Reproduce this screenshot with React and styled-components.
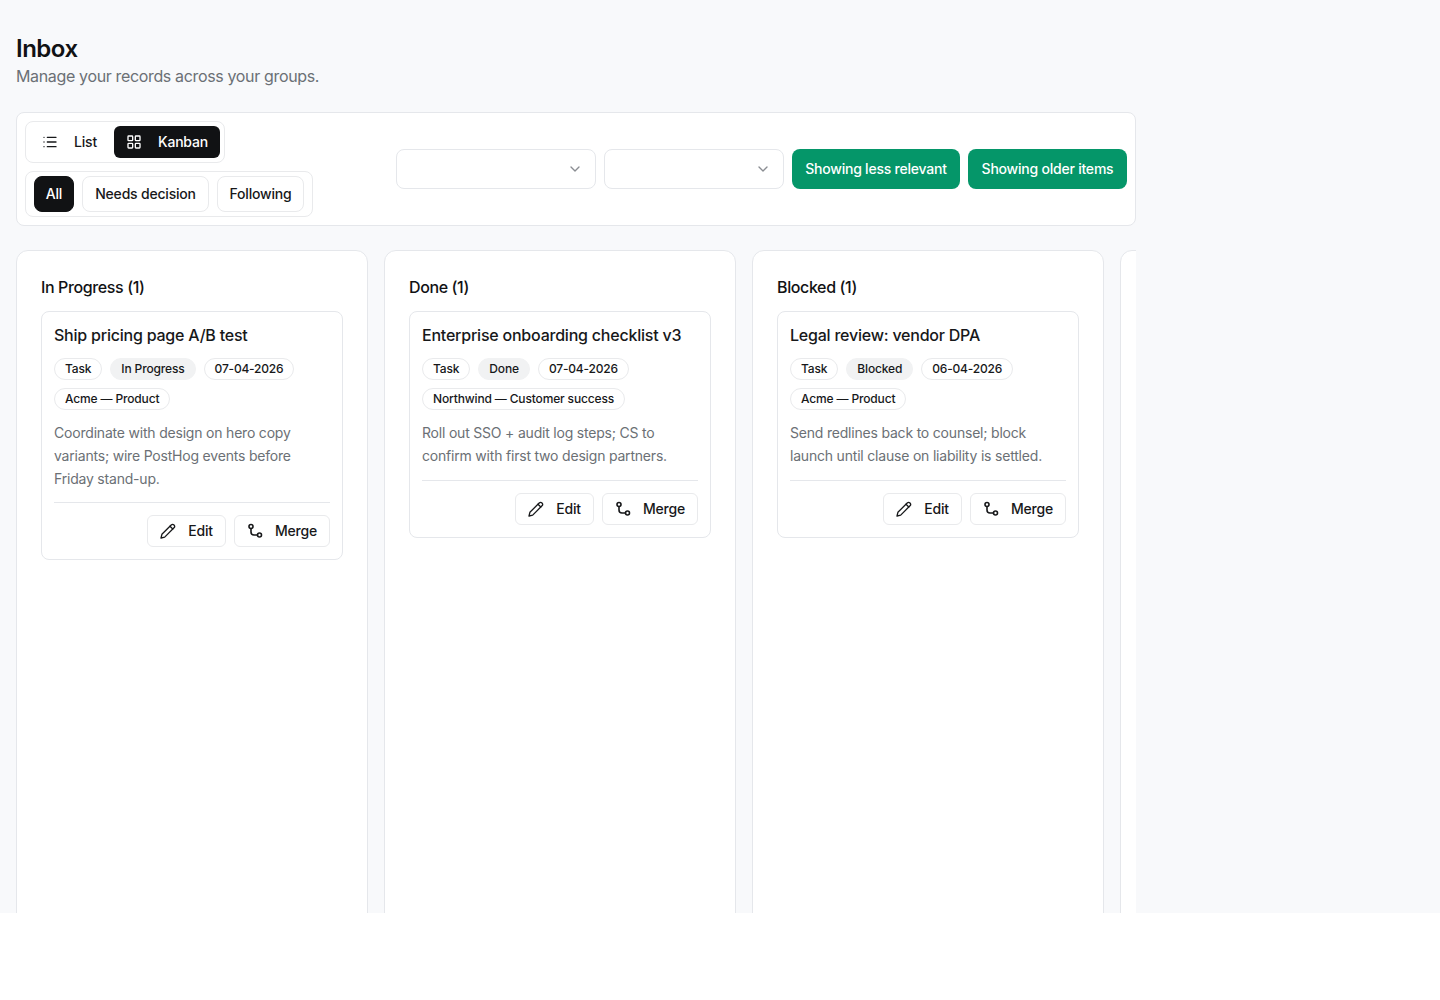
import React from "react";
import styled, { createGlobalStyle } from "styled-components";
import { List, LayoutGrid, ChevronDown } from "lucide-react";

const Global = createGlobalStyle`
  * { box-sizing: border-box; }
  html, body { margin: 0; padding: 0; background: #fff; }
  body { font-family: "Inter", "Noto Sans", sans-serif; color: #111; }
`;

const Page = styled.div`
  width: 1440px;
  height: 913px;
  background: #f8f9fb;
  padding: 33px 304px 0 16px;
  overflow: hidden;
`;
const Title = styled.h1`
  margin: 0;
  font-size: 24px;
  line-height: 31px;
  font-weight: 600;
  letter-spacing: -0.5px;
  color: #111214;
`;
const Subtitle = styled.p`
  margin: 0;
  font-size: 16px;
  line-height: 24px;
  font-weight: 400;
  letter-spacing: -0.35px;
  color: #6b7075;
`;
const Toolbar = styled.div`
  margin-top: 24px;
  height: 114px;
  background: #fff;
  border: 1px solid #e5e7eb;
  border-radius: 8px;
  padding: 8px;
  display: flex;
  align-items: center;
  justify-content: space-between;
`;
const LeftStack = styled.div`
  display: flex;
  flex-direction: column;
  align-items: flex-start;
  gap: 8px;
`;
const Segment = styled.div`
  display: flex;
  gap: ${(p) => p.$gap}px;
  padding: 4px;
  padding-left: 8px;
  padding-right: ${(p) => p.$pr ?? 4}px;
  background: #fff;
  border: 1px solid #e9eaec;
  border-radius: 8px;
`;
const ViewButton = styled.button`
  height: 32px;
  display: flex;
  align-items: center;
  gap: 16px;
  padding: 0 ${(p) => (p.$active ? 12 : 13)}px 0 ${(p) => (p.$active ? 12 : 8)}px;
  border: 0;
  border-radius: 6px;
  font: 500 14px "Inter", sans-serif;
  letter-spacing: -0.2px;
  background: ${(p) => (p.$active ? "#111214" : "#fff")};
  color: ${(p) => (p.$active ? "#fff" : "#17181a")};
  & > span {
    position: relative;
    top: -1px;
  }
`;
const FilterButton = styled.button`
  width: ${(p) => p.$w}px;
  height: 36px;
  padding: 0 0 2px;
  border-radius: 8px;
  border: 1px solid ${(p) => (p.$active ? "#111214" : "#e9eaec")};
  font: 500 14px "Inter", sans-serif;
  letter-spacing: -0.2px;
  background: ${(p) => (p.$active ? "#111214" : "#fff")};
  color: ${(p) => (p.$active ? "#fff" : "#17181a")};
`;
const RightRow = styled.div`
  display: flex;
  gap: 8px;
  align-items: center;
`;
const SelectBox = styled.div`
  width: ${(p) => p.$w}px;
  height: 40px;
  display: flex;
  align-items: center;
  justify-content: flex-end;
  padding-right: 12px;
  background: #fff;
  border: 1px solid #e5e7eb;
  border-radius: 8px;
  color: #8a8d92;
`;
const GreenButton = styled.button`
  width: ${(p) => p.$w}px;
  height: 40px;
  padding: 0 0 2px;
  border: 0;
  border-radius: 8px;
  background: #059669;
  color: #fff;
  font: 500 14px "Inter", sans-serif;
  letter-spacing: -0.22px;
`;
const Board = styled.div`
  margin-top: 24px;
  display: flex;
  gap: 16px;
  overflow: hidden;
  height: 700px;
`;
const Column = styled.section`
  flex: 0 0 352px;
  background: #fff;
  border: 1px solid #e5e7eb;
  border-radius: 12px;
  padding: 24px;
`;
const ColumnTitle = styled.h2`
  margin: 0 0 12px;
  font-size: 16px;
  line-height: 24px;
  font-weight: 500;
  letter-spacing: -0.38px;
  color: #111214;
`;
const Card = styled.article`
  background: #fff;
  border: 1px solid #e5e7eb;
  border-radius: 8px;
  padding: 12px;
`;
const CardTitle = styled.h3`
  margin: -1px 0 11px;
  font-size: 16px;
  line-height: 24px;
  font-weight: 500;
  letter-spacing: -0.22px;
  color: #17181a;
`;
const Tags = styled.div`
  display: flex;
  flex-wrap: wrap;
  gap: 8px;
`;
const Tag = styled.span`
  height: 22px;
  display: inline-flex;
  align-items: center;
  padding: 0 10px 2px;
  border-radius: 999px;
  border: 1px solid ${(p) => (p.$muted ? "#f1f2f3" : "#e9eaec")};
  background: ${(p) => (p.$muted ? "#f1f2f3" : "#fff")};
  font-size: 12px;
  font-weight: 500;
  letter-spacing: -0.15px;
  color: #17181a;
`;
const DateTag = styled(Tag)`
  letter-spacing: -0.2px;
`;
const Description = styled.p`
  margin: 12px 0 0;
  font-size: 14px;
  line-height: 22.75px;
  letter-spacing: -0.2px;
  color: #6b7075;
`;
const CardFooter = styled.div`
  margin-top: 12.1px;
  padding-top: 12px;
  border-top: 1px solid #e5e7eb;
  display: flex;
  justify-content: flex-end;
  gap: 8px;
`;
const ActionButton = styled.button`
  width: ${(p) => p.$w}px;
  height: 32px;
  display: flex;
  align-items: center;
  justify-content: center;
  gap: 12px;
  padding: 0;
  background: #fff;
  border: 1px solid #e9eaec;
  border-radius: 6px;
  font: 500 14px "Inter", sans-serif;
  letter-spacing: -0.2px;
  color: #17181a;
  & > span {
    position: relative;
    top: -0.4px;
  }
`;

const PenIcon = () => (
  <svg width="16" height="16" viewBox="0 0 16 16" fill="none" stroke="currentColor" strokeWidth="1.3" strokeLinecap="round" strokeLinejoin="round">
    <path d="M1 15l.9-3.7L11.2 2a2 2 0 0 1 2.8 0 2 2 0 0 1 0 2.8L4.7 14.1 1 15z" />
    <path d="M10 3.2l2.8 2.8" />
  </svg>
);

const MergeIcon = () => (
  <svg width="16" height="16" viewBox="0 0 16 16" fill="none" stroke="currentColor" strokeWidth="1.6" strokeLinecap="round" strokeLinejoin="round">
    <circle cx="4" cy="3.5" r="2" />
    <circle cx="12.5" cy="12" r="2" />
    <path d="M4 5.5V9a3 3 0 0 0 3 3h3.5" />
  </svg>
);

const columns = [
  { name: "In Progress (1)", title: "Ship pricing page A/B test", status: "In Progress", date: "07-04-2026", group: "Acme — Product", desc: "Coordinate with design on hero copy variants; wire PostHog events before Friday stand-up." },
  { name: "Done (1)", title: "Enterprise onboarding checklist v3", status: "Done", date: "07-04-2026", group: "Northwind — Customer success", desc: "Roll out SSO + audit log steps; CS to confirm with first two design partners." },
  { name: "Blocked (1)", title: "Legal review: vendor DPA", status: "Blocked", date: "06-04-2026", group: "Acme — Product", desc: "Send redlines back to counsel; block launch until clause on liability is settled." },
];

export default function App() {
  return (
    <>
      <Global />
      <Page>
        <Title>Inbox</Title>
        <Subtitle>Manage your records across your groups.</Subtitle>
        <Toolbar>
          <LeftStack>
            <Segment $gap={4}>
              <ViewButton><List size={16} /><span>List</span></ViewButton>
              <ViewButton $active><LayoutGrid size={16} /><span>Kanban</span></ViewButton>
            </Segment>
            <Segment $gap={8} $pr={8}>
              <FilterButton $active $w={40}>All</FilterButton>
              <FilterButton $w={127}>Needs decision</FilterButton>
              <FilterButton $w={87}>Following</FilterButton>
            </Segment>
          </LeftStack>
          <RightRow>
            <SelectBox $w={200}><ChevronDown size={16} /></SelectBox>
            <SelectBox $w={180}><ChevronDown size={16} /></SelectBox>
            <GreenButton $w={168}>Showing less relevant</GreenButton>
            <GreenButton $w={159}>Showing older items</GreenButton>
          </RightRow>
        </Toolbar>
        <Board>
          {columns.map((c) => (
            <Column key={c.name}>
              <ColumnTitle>{c.name}</ColumnTitle>
              <Card>
                <CardTitle>{c.title}</CardTitle>
                <Tags>
                  <Tag>Task</Tag>
                  <Tag $muted>{c.status}</Tag>
                  <DateTag>{c.date}</DateTag>
                  <Tag>{c.group}</Tag>
                </Tags>
                <Description>{c.desc}</Description>
                <CardFooter>
                  <ActionButton $w={79}><PenIcon /><span>Edit</span></ActionButton>
                  <ActionButton $w={96}><MergeIcon /><span>Merge</span></ActionButton>
                </CardFooter>
              </Card>
            </Column>
          ))}
          <Column />
        </Board>
      </Page>
    </>
  );
}
